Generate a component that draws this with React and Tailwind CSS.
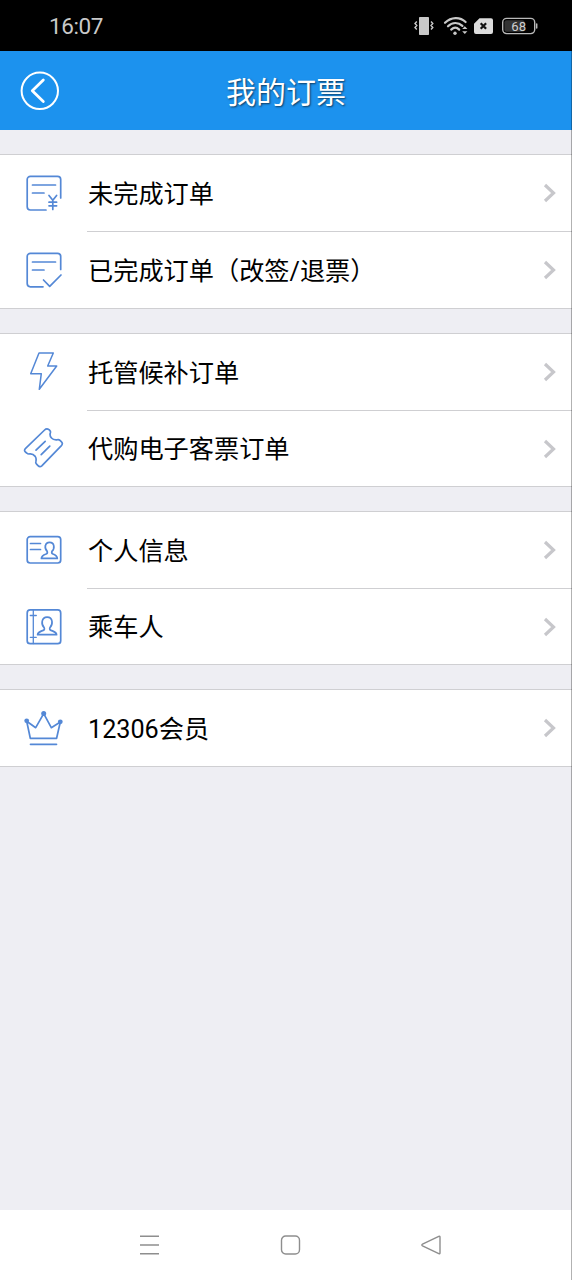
const groups = [
  [
    { icon: UnpaidIcon, label: '未完成订单', height: 'h-[77px]' },
    { icon: DoneIcon, label: '已完成订单（改签/退票）', height: 'h-[76px]' },
  ],
  [
    { icon: BoltIcon, label: '托管候补订单', height: 'h-[77px]' },
    { icon: TicketIcon, label: '代购电子客票订单', height: 'h-[75px]' },
  ],
  [
    { icon: ProfileIcon, label: '个人信息', height: 'h-[77px]' },
    { icon: PassengerIcon, label: '乘车人', height: 'h-[75px]' },
  ],
  [{ icon: CrownIcon, label: '12306会员', height: 'h-[76px]' }],
];

function Icon({ children }) {
  return (
    <svg
      className="ml-[22px] mt-4 self-start w-11 h-11 shrink-0 text-[#5488d6]"
      viewBox="0 0 44 44"
      fill="none"
      stroke="currentColor"
      strokeWidth="1.7"
      strokeLinecap="round"
      strokeLinejoin="round"
    >
      {children}
    </svg>
  );
}

function UnpaidIcon() {
  return (
    <Icon>
      <path d="M38.7 27V8.5a3.2 3.2 0 0 0-3.2-3.200H8.400a3.200 3.200 0 0 0-3.200 3.200v27.300a3.200 3.200 0 0 0 3.200 3.200H24" />
      <path d="M10.5 14H33.5M10.5 22H22" />
      <path d="M27 24.5l3.8 4.7 3.8-4.7M30.8 29.2V38.5M27 31.2h7.6M27 34.8h7.6" />
    </Icon>
  );
}

function DoneIcon() {
  return (
    <Icon>
      <path d="M38.7 21.5V8.5a3.2 3.2 0 0 0-3.200-3.200H8.400a3.200 3.200 0 0 0-3.200 3.200v27.100a3.200 3.200 0 0 0 3.200 3.200H21" />
      <path d="M10.5 14H33.5M10.5 22H22" />
      <path d="M21.5 32l6.2 6.3L39 27" />
    </Icon>
  );
}

function BoltIcon() {
  return (
    <Icon>
      <path strokeWidth="1.5" d="M17 3h14.3l-5.6 13h9L17.3 39.3l2-15.6H8.7z" />
    </Icon>
  );
}

function TicketIcon() {
  return (
    <Icon>
      <g transform="translate(0 -1)">
        <path d="M22.6 4L3.6 22.3Q1.6 24.3 3.4 26L4.8 27.2Q6.2 28.4 8 27.8Q11 27.6 13.2 30.4Q14.6 32.6 13.9 35.4Q13.4 37 14.6 38.2L16 39.6Q17.9 41.6 19.8 39.8L39.4 19.6Q41.2 17.6 39.5 15.9L38 14.4Q36.7 13.2 35.1 13.8Q31.5 14.2 29.5 12Q27.3 9.6 28.4 6.6Q28.8 5.4 27.7 4.3L27 3.6Q24.6 2 22.6 4z" />
        <path d="M14 24.2l9.2-8.9M19.2 28.6l8.6-8.4" />
      </g>
    </Icon>
  );
}

function ProfileIcon() {
  return (
    <Icon>
      <rect x="5.2" y="8.6" width="33.5" height="26.4" rx="3" />
      <path d="M8.5 15.5h10M8.5 21.5h10" />
      <path d="M25.2 23.4C23.4 21.6 23 19.4 23.4 17.8C24 14.9 26 14.3 27.6 14.3C29.3 14.3 31.3 15 31.8 17.8C32.1 19.4 31.7 21.6 29.9 23.4C29.5 24.6 29.9 25.5 31 26C34 27.2 35.3 27.9 35.3 30.4H19.4C19.4 27.9 21 27.2 24.1 26C25.2 25.5 25.6 24.6 25.2 23.4z" />
    </Icon>
  );
}

function PassengerIcon() {
  return (
    <Icon>
      <rect x="5.2" y="4.9" width="33.5" height="33.8" rx="3" />
      <path strokeWidth="1.3" d="M11.3 5v33.5M8.3 10.5h6M8.3 32.3h6" />
      <path d="M22.2 22.7C20.3 20.6 19.8 18.3 20.2 16.3C20.8 13.1 23 12.1 25.1 12.1C27.2 12.1 29.5 13.1 30 16.3C30.3 18.3 29.8 20.6 27.9 22.7C27.4 24 27.9 25 29 25.4C32.4 26.7 34.5 27 34.6 29.7H15.6C15.7 27 17.8 26.7 21.2 25.4C22.3 25 22.7 24 22.2 22.7z" />
    </Icon>
  );
}

function CrownIcon() {
  return (
    <Icon>
      <path d="M4.7 15.3l3.6 17h26.3l3.7-16.3-9 5.7-7.6-14-8 14z" />
      <path d="M8.5 38.3h26" />
      <g fill="currentColor" stroke="none">
        <circle cx="4.7" cy="14.8" r="2.4" />
        <circle cx="21.7" cy="7.5" r="2.5" />
        <circle cx="38.3" cy="15.8" r="2.4" />
      </g>
    </Icon>
  );
}

function StatusBar() {
  return (
    <div className="h-[51px] shrink-0 bg-black flex items-center justify-between pl-[49px] pr-[34px]">
      <span className="pt-px text-[22.5px] leading-none tracking-[-0.4px] text-[#c9c9c9] font-['Roboto',sans-serif]">16:07</span>
      <svg width="124" height="20" viewBox="0 0 124 20" fill="none">
        {/* vibrate */}
        <rect x="5" y="1" width="10" height="18" rx="0.8" fill="#c9c9c9" />
        <path d="M2.8 5.5l-1.8 2 1.8 2-1.8 2 1.8 2M17 5.5l1.8 2-1.8 2 1.8 2-1.8 2" stroke="#c9c9c9" strokeWidth="1.4" />
        {/* wifi */}
        <g stroke="#c9c9c9" strokeWidth="2.2" strokeLinecap="round">
          <path d="M31 6.8c6.2-6.2 15.2-6.2 20.6-0.8" />
          <path d="M34 10.3c4.3-4.3 10.3-4.3 14.4-0.4" />
          <path d="M37.2 13.6c2.5-2.4 5.6-2.4 8 0" />
        </g>
        <circle cx="41" cy="17.2" r="1.7" fill="#c9c9c9" />
        <path d="M48.2 13l2.6-2.8 2.6 2.8zM48.2 15.3l2.6 2.8 2.6-2.8z" fill="#c9c9c9" />
        {/* sim card */}
        <path d="M65.5 2.2H77a2 2 0 0 1 2 2V16a2 2 0 0 1-2 2H62a2 2 0 0 1-2-2V7.8z" fill="#dcdcdc" />
        <path d="M66.7 7.2l5.4 5.6M72.1 7.2l-5.4 5.6" stroke="#111" strokeWidth="2.2" />
        {/* battery */}
        <rect x="88.7" y="2.4" width="32" height="15.2" rx="4" stroke="#b9b9b9" strokeWidth="1.4" />
        <path d="M122.7 8v4" stroke="#b9b9b9" strokeWidth="1.5" strokeLinecap="round" />
        <rect x="90.5" y="4.2" width="20" height="11.6" rx="2" fill="#333" />
        <text x="104.7" y="14.7" textAnchor="middle" fontSize="13.2" fontFamily="Roboto, sans-serif" fill="#d0d0d0">68</text>
      </svg>
    </div>
  );
}

function Header() {
  return (
    <header className="h-[79px] shrink-0 bg-[#1c92ee] grid grid-cols-[80px_1fr_80px] items-center">
      <button className="ml-5 w-10 h-10" aria-label="返回">
        <svg width="40" height="40" viewBox="0 0 40 40" fill="none" stroke="#fff" strokeLinecap="round" strokeLinejoin="round">
          <circle cx="19.8" cy="19.8" r="18.2" strokeWidth="2" />
          <path d="M23.3 9L12.3 19.8l11 10.8" strokeWidth="2.8" />
        </svg>
      </button>
      <h1 className="pt-1 text-center text-[30px] leading-none text-white [text-shadow:1px_1px_2px_rgba(0,0,0,0.6)]">我的订票</h1>
    </header>
  );
}

function Row({ item, divider }) {
  const ItemIcon = item.icon;
  return (
    <li className={`flex items-center ${item.height}`}>
      <ItemIcon />
      <div className={`ml-[21px] flex-1 h-full flex items-center justify-between pr-4 ${divider ? 'border-b border-[#cfcfd2]' : ''}`}>
        <span className="pl-px pt-[3px] text-[25.2px] leading-[30px] text-black">{item.label}</span>
        <svg width="13" height="20" viewBox="0 0 13 20" fill="none" stroke="#c7c7cb" strokeWidth="3.2">
          <path d="M2 2l8.5 8L2 18" />
        </svg>
      </div>
    </li>
  );
}

function NavBar() {
  return (
    <nav className="h-[70px] shrink-0 bg-white flex items-center justify-between pl-[138px] pr-[128px] text-[#8e8e8e]">
      <svg width="24" height="24" viewBox="0 0 24 24" fill="none" stroke="currentColor" strokeWidth="1.4">
        <path d="M2 3.2h19M2 12h19M2 20.8h19" />
      </svg>
      <svg width="24" height="24" viewBox="0 0 24 24" fill="none" stroke="currentColor" strokeWidth="1.4">
        <rect x="2.5" y="3" width="18" height="18" rx="4.2" />
      </svg>
      <svg width="24" height="24" viewBox="0 0 24 24" fill="none" stroke="currentColor" strokeWidth="1.4" strokeLinejoin="round">
        <path d="M18.8 3.3L2.5 11.2q-1.3.8 0 1.6l16.3 7.9q1.2.4 1.2-1V4.3q0-1.4-1.2-1z" />
      </svg>
    </nav>
  );
}

export default function App() {
  return (
    <div className="relative w-[572px] h-[1280px] flex flex-col overflow-hidden bg-[#eeeef3] font-['Roboto','Noto_Sans_CJK_SC',sans-serif]">
      <StatusBar />
      <Header />
      <main className="flex-1 pt-6 flex flex-col gap-6">
        {groups.map((items, i) => (
          <ul key={i} className="bg-white border-y border-[#cfcfd2]">
            {items.map((item, j) => (
              <Row key={item.label} item={item} divider={j < items.length - 1} />
            ))}
          </ul>
        ))}
      </main>
      <NavBar />
      {/* thin edge line */}
      <div className="absolute right-0 top-[51px] bottom-0 w-px bg-black/30" />
    </div>
  );
}
